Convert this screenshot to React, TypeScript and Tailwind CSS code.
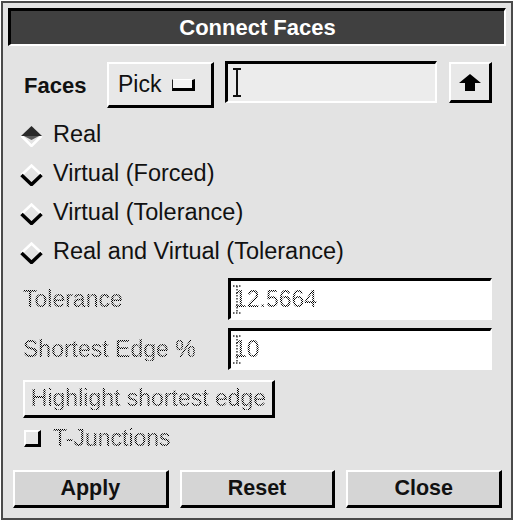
import React from "react";

const FONT = "font-['Liberation_Sans',Arial,sans-serif]";
const STIPPLE =
  "bg-[image:repeating-conic-gradient(#000_0_25%,transparent_0_50%)] bg-[length:2px_2px] bg-clip-text text-transparent";

function Diamond({ on }: { on: boolean }) {
  return (
    <svg width="23" height="22" viewBox="0 0 23 22" className="shrink-0">
      {on ? (
        <>
          <path d="M1.5 11 L11.5 21 L21.5 11" fill="none" stroke="#ffffff" strokeWidth="2.5" />
          <polygon points="1,11 11.5,1 22,11" fill="#2a2a2a" />
          <polygon points="4,11 11.5,15 19,11" fill="#5a5a5a" />
        </>
      ) : (
        <>
          <path d="M1.5 11 L11.5 1.5 L21.5 11" fill="none" stroke="#ffffff" strokeWidth="2.5" />
          <path d="M1.5 11 L11.5 20.5 L21.5 11" fill="none" stroke="#000000" strokeWidth="3.5" />
        </>
      )}
    </svg>
  );
}

function IBeam({ dotted }: { dotted?: boolean }) {
  const c = dotted ? "#333" : "#111";
  return (
    <svg width="10" height="29" viewBox="0 0 10 29" className="shrink-0">
      <path
        d="M1 1 H9 M5 1 V28 M1 28 H9"
        fill="none"
        stroke={c}
        strokeWidth={dotted ? 1.5 : 2}
        strokeDasharray={dotted ? "1.5 1.5" : undefined}
      />
    </svg>
  );
}

function Field({ value }: { value: string }) {
  return (
    <div className="flex h-[42px] w-[264px] items-center border-t-[3px] border-l-[3px] border-b-2 border-r-2 border-t-black border-l-black border-b-white border-r-white bg-white pl-[1px]">
      <IBeam dotted />
      <span className={`text-[23px] leading-none -ml-[8px] ${STIPPLE}`}>{value}</span>
    </div>
  );
}

const RADIOS = [
  { label: "Real", on: true },
  { label: "Virtual (Forced)", on: false },
  { label: "Virtual (Tolerance)", on: false },
  { label: "Real and Virtual (Tolerance)", on: false },
];

export default function App() {
  return (
    <div className={`h-[521px] w-[514px] bg-white p-px ${FONT}`}>
      <div className="flex h-full w-full flex-col border-2 border-[#4a4a4a] bg-[#e3e3e3] text-[#111]">
        {/* title */}
        <div className="mx-[5px] mt-[5px] flex h-[38px] items-center justify-center border-t-[3px] border-l-[3px] border-b-2 border-r-2 border-t-black border-l-black border-b-white border-r-white bg-[#404040]">
          <span className="text-[22px] font-bold leading-none text-white">Connect Faces</span>
        </div>

        {/* faces row */}
        <div className="mt-[15px] flex h-[47px] items-start pl-[21px]">
          <span className="mt-[14px] w-[83px] text-[22px] font-bold leading-none">Faces</span>
          <button
            type="button"
            className="mt-px flex h-[46px] w-[107px] items-center border-t-2 border-l-2 border-b-[3px] border-r-[3px] border-t-white border-l-white border-b-black border-r-black bg-[#e8e8e8] pl-[9px]"
          >
            <span className="text-[23px] leading-none">Pick</span>
            <span className="ml-[11px] mt-[1px] h-[12px] w-[23px] border-t border-l border-b-[3px] border-r-[3px] border-t-white border-l-[#222] border-b-black border-r-black bg-[#f4f4f4]" />
          </button>
          <div className="ml-[11px] flex h-[42px] w-[212px] items-center border-t-[3px] border-l-[3px] border-b-2 border-r-2 border-t-black border-l-black border-b-white border-r-white bg-[#ececec] pl-[4px]">
            <IBeam />
          </div>
          <button
            type="button"
            className="ml-[12px] mt-px flex h-[41px] w-[43px] items-center justify-center border-t-2 border-l-2 border-b-[3px] border-r-[3px] border-t-white border-l-white border-b-black border-r-black bg-[#e8e8e8]"
          >
            <svg width="22" height="17" viewBox="0 0 22 17">
              <polygon points="11,0 22,9 16,9 16,17 6,17 6,9 0,9" fill="#000" />
            </svg>
          </button>
        </div>

        {/* radios */}
        <div className="mt-[7px] flex flex-col pl-[17px]">
          {RADIOS.map((r) => (
            <div key={r.label} className="flex h-[39px] items-center gap-[10px]">
              <span className="mt-[3px] flex">
                <Diamond on={r.on} />
              </span>
              <span className="text-[23.5px] leading-none">{r.label}</span>
            </div>
          ))}
        </div>

        {/* tolerance */}
        <div className="mt-[7px] flex h-[42px] items-center pl-[20px]">
          <span className={`w-[205px] text-[23px] leading-none ${STIPPLE}`}>Tolerance</span>
          <Field value="12.5664" />
        </div>
        <div className="mt-[8px] flex h-[42px] items-center pl-[20px]">
          <span className={`w-[205px] text-[23px] leading-none ${STIPPLE}`}>Shortest Edge %</span>
          <Field value="10" />
        </div>

        {/* highlight */}
        <div className="mt-[10px] pl-[20px]">
          <button
            type="button"
            className="flex h-[38px] w-[252px] items-center justify-center border-t-2 border-l-2 border-b-[3px] border-r-[3px] border-t-white border-l-white border-b-black border-r-black bg-[#e6e6e6]"
          >
            <span className={`text-[23px] leading-none ${STIPPLE}`}>Highlight shortest edge</span>
          </button>
        </div>

        {/* t-junctions */}
        <div className="mt-[10px] flex h-[20px] items-center pl-[21px]">
          <span className="h-[17px] w-[17px] border-t-2 border-l-2 border-b-[3px] border-r-[3px] border-t-white border-l-white border-b-black border-r-black bg-[#e6e6e6]" />
          <span className={`ml-[12px] text-[23px] leading-none ${STIPPLE}`}>T-Junctions</span>
        </div>

        {/* bottom buttons */}
        <div className="mt-[22px] grid grid-cols-3 gap-[11px] pl-[10px] pr-[9px]">
          {["Apply", "Reset", "Close"].map((b) => (
            <button
              key={b}
              type="button"
              className="flex h-[38px] items-center justify-center border-t-2 border-l-2 border-b-[3px] border-r-[3px] border-t-white border-l-white border-b-black border-r-black bg-[#d5d5d5]"
            >
              <span className="text-[21.5px] font-bold leading-none">{b}</span>
            </button>
          ))}
        </div>
      </div>
    </div>
  );
}
